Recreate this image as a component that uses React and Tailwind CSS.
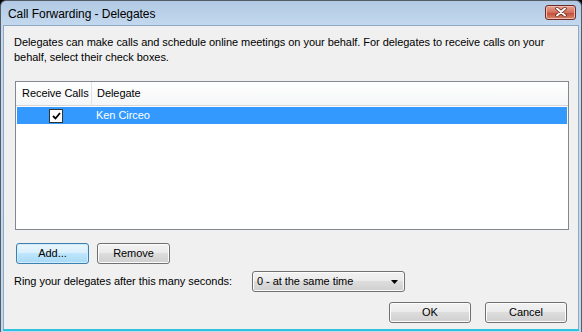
export default function App() {
  const btn =
    'h-[21px] w-[73px] rounded-[3px] border border-[#707070] bg-[linear-gradient(#f2f2f2_0%,#ebebeb_45%,#dddddd_50%,#cfcfcf_100%)] text-[11px] text-black flex items-center justify-center shadow-[inset_0_0_0_1px_#fcfcfc]';

  return (
    <div className="w-[582px] h-[332px] bg-black font-['Liberation_Sans',sans-serif] text-[11px] tracking-[-0.05px] text-black whitespace-nowrap">
      <div className="w-full h-full flex flex-col rounded-t-[6px] border border-[#555c66] bg-[linear-gradient(#b1c9e3,#c4d9ef_25px,#c1d7ee)] border-b-0">
        {/* title bar */}
        <div className="h-[24px] flex items-center justify-between pl-[7px] pr-[5px] shrink-0">
          <span className="text-[12px] pt-[1px]">Call Forwarding - Delegates</span>
          <button className="mt-[-2px] w-[31px] h-[15px] rounded-[3px] border border-[#6d2a27] bg-[linear-gradient(#e8a493,#d26f5c_50%,#c04a33_51%,#d9856c)] flex items-center justify-center shadow-[inset_0_0_0_1px_#f0b9ab]">
            <svg width="12" height="10" viewBox="0 0 12 10">
              <path d="M2 1.5 L10 8.5 M10 1.5 L2 8.5" stroke="#5a1d18" strokeWidth="3.4" strokeLinecap="round" />
              <path d="M2 1.5 L10 8.5 M10 1.5 L2 8.5" stroke="#ffffff" strokeWidth="2" strokeLinecap="round" />
            </svg>
          </button>
        </div>

        {/* client */}
        <div className="flex-1 min-h-0 mx-[2px] border-t border-l border-r border-[#8fa8c4] bg-[#f0f0f0] flex flex-col px-[10px]">
          <p className="mt-[9px] leading-[15px]">
            Delegates can make calls and schedule online meetings on your behalf. For delegates to receive calls on your
            <br />
            behalf, select their check boxes.
          </p>

          <div className="mt-[16px] ml-[1px] w-[554px] h-[149px] shrink-0 border border-[#828790] bg-white flex flex-col">
            <div className="h-[24px] flex border-b border-[#d5d5d5] bg-[linear-gradient(#ffffff,#f5f6f7)]">
              <div className="w-[76px] flex items-center pl-[6px] border-r border-[#e2e3e5]">Receive Calls</div>
              <div className="flex items-center pl-[5px]">Delegate</div>
            </div>
            <div className="mt-[1px] mx-[1px] h-[17px] flex items-center bg-[#3399ff] text-white">
              <div className="w-[76px] flex justify-center">
                <span className="w-[14px] h-[14px] bg-white border border-[#333] flex items-center justify-center ml-[2px]">
                  <svg width="9" height="8" viewBox="0 0 9 8">
                    <path d="M1 4 L3.5 6.5 L8 1" stroke="#000" strokeWidth="1.8" fill="none" />
                  </svg>
                </span>
              </div>
              <span className="pl-[3px]">Ken Circeo</span>
            </div>
          </div>

          <div className="mt-[13px] ml-[2px] flex gap-[8px]">
            <button className="h-[21px] w-[73px] rounded-[3px] border border-[#3c7fb1] bg-[linear-gradient(#eaf6fd_0%,#d9f0fc_45%,#bee6fd_50%,#a7d9f5_100%)] text-[11px] flex items-center justify-center shadow-[inset_0_0_0_1px_#d2ecfb]">
              Add...
            </button>
            <button className={btn}>Remove</button>
          </div>

          <div className="mt-[7px] flex items-center">
            <span className="w-[238px]">Ring your delegates after this many seconds:</span>
            <div className="h-[21px] w-[153px] rounded-[3px] border border-[#707070] bg-[linear-gradient(#f2f2f2_0%,#ebebeb_45%,#dddddd_50%,#cfcfcf_100%)] flex items-center justify-between pl-[4px] pr-[6px] shadow-[inset_0_0_0_1px_#fcfcfc]">
              <span>0 - at the same time</span>
              <svg width="7" height="4" viewBox="0 0 7 4">
                <path d="M0 0 L7 0 L3.5 4 Z" fill="#000" />
              </svg>
            </div>
          </div>

          <div className="mt-[10px] flex justify-end gap-[14px] pr-[1px]">
            <button className={btn + ' w-[82px]'}>OK</button>
            <button className={btn + ' w-[82px]'}>Cancel</button>
          </div>
        </div>
        <div className="h-[2px] mx-[2px] bg-[#2fc1de] shrink-0"></div>
        <div className="h-[1px] shrink-0 bg-[#c1d7ee]"></div>
      </div>
    </div>
  );
}
